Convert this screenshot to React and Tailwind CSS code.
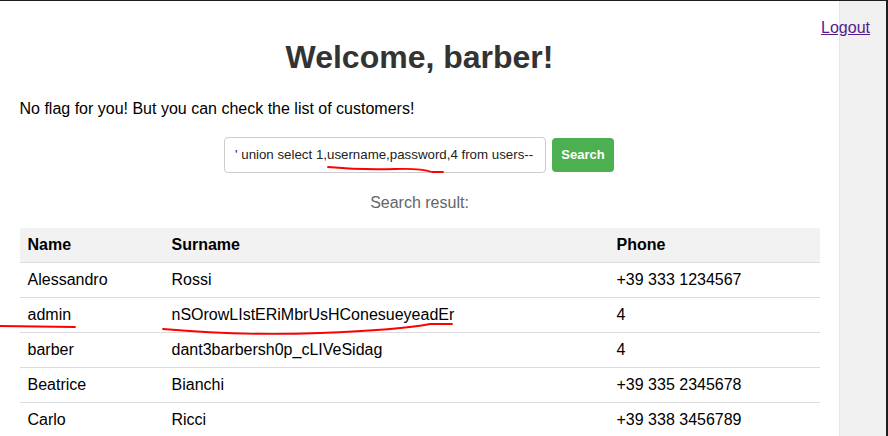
import React from 'react';

const rows = [
    { name: 'Alessandro', surname: 'Rossi', phone: '+39 333 1234567' },
    { name: 'admin', surname: 'nSOrowLIstERiMbrUsHConesueyeadEr', phone: '4' },
    { name: 'barber', surname: 'dant3barbersh0p_cLIVeSidag', phone: '4' },
    { name: 'Beatrice', surname: 'Bianchi', phone: '+39 335 2345678' },
    { name: 'Carlo', surname: 'Ricci', phone: '+39 338 3456789' },
];

export default function App() {
    return (
        <div className="relative w-[888px] h-[436px] overflow-hidden flex border-t border-r-2 border-[#1e1e1e] bg-white font-['Liberation_Sans',Arial,sans-serif] text-[16px] text-black">
            {/* page */}
            <div className="flex-1 min-w-0">
                <div className="w-[800px] mx-auto">
                    <h1 className="text-center text-[32px] leading-[37px] font-bold text-[#333] mt-[38px]">Welcome, barber!</h1>
                    <p className="mt-[24px] leading-[18px]">No flag for you! But you can check the list of customers!</p>

                    <div className="flex justify-center items-center gap-[6px] mt-[19px] pr-[1px]">
                        <div className="w-[322px] h-[36px] border border-[#ccc] rounded-[4px] flex items-center pl-[10px] text-[13.3px] text-[#222] whitespace-nowrap overflow-hidden">
                            ' union select 1,username,password,4 from users--
                        </div>
                        <button className="h-[34px] w-[62px] bg-[#4caf50] text-white text-[13px] font-bold rounded-[4px]">Search</button>
                    </div>

                    <p className="text-center text-[#666] mt-[21px] leading-[18px]">Search result:</p>

                    <table className="w-full border-collapse mt-[16px]">
                        <thead>
                            <tr className="bg-[#f2f2f2] border-b border-[#ddd]">
                                <th className="w-[144px] text-left font-bold px-[8px] py-[8px] leading-[18px]">Name</th>
                                <th className="w-[445px] text-left font-bold px-[8px] py-[8px] leading-[18px]">Surname</th>
                                <th className="text-left font-bold px-[8px] py-[8px] leading-[18px]">Phone</th>
                            </tr>
                        </thead>
                        <tbody>
                            {rows.map((r) => (
                                <tr key={r.name} className="border-b border-[#ddd]">
                                    <td className="px-[8px] py-[8px] leading-[18px]">{r.name}</td>
                                    <td className="px-[8px] py-[8px] leading-[18px]">{r.surname}</td>
                                    <td className="px-[8px] py-[8px] leading-[18px]">{r.phone}</td>
                                </tr>
                            ))}
                        </tbody>
                    </table>
                </div>
            </div>

            {/* right gutter */}
            <div className="w-[47px] shrink-0 bg-[#f0f0f0] border-l border-[#e6e6e6]" />

            <a href="#" className="absolute top-[18px] right-[16px] text-[#551a8b] underline leading-[18px]">Logout</a>

            {/* hand-drawn red marks */}
            <svg className="absolute -top-px left-0 pointer-events-none" width="888" height="436" viewBox="0 0 888 436" fill="none">
                <path d="M328 167 Q360 170 395 169 Q420 168 432 172 L443 172" stroke="#ff0000" strokeWidth="1.8" strokeLinecap="round" />
                <path d="M0 326 L75 327" stroke="#ff0000" strokeWidth="1.8" strokeLinecap="round" />
                <path d="M163 329 Q240 336 320 333 Q400 330 430 324 L452 324" stroke="#ff0000" strokeWidth="1.8" strokeLinecap="round" />
            </svg>
        </div>
    );
}
